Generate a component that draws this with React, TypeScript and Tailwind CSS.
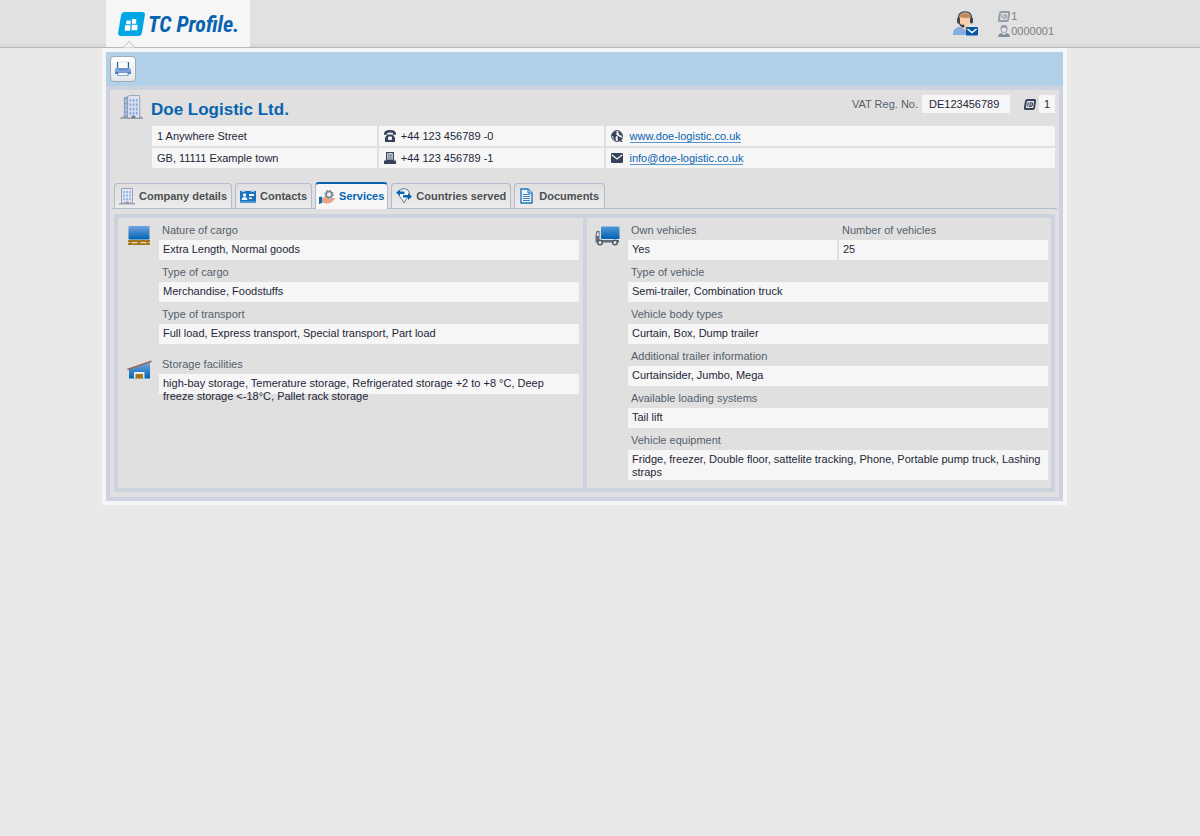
import React, { useState } from "react";

type IconProps = { className?: string };

const LogoMark = () => (
  <svg viewBox="0 0 27 24" className="h-6 w-[27px] shrink-0" aria-hidden="true">
    <path d="M7 0H24Q27.400 0 26.800 3.300L24 20.500Q23.400 24 20 24H3Q-.4 24 .2 20.600L3 3.500Q3.600 0 7 0Z" fill="#00a5e3" />
    <path d="M8.500 8.500H12.700V12.200H8.200ZM14 7H18.200V11.700H14ZM7 13.200H12.500L12 18.700H6.700ZM13.800 12.700H19.600L19.300 18.200H13.400Z" fill="#fff" />
  </svg>
);

const PrinterIcon = () => (
  <svg viewBox="0 0 16 16" className="size-4" aria-hidden="true">
    <path d="M3 1H13V8H3Z" fill="#fdfdff" stroke="#c3cfe0" strokeWidth=".6" />
    <path d="M2.500 1V7.500M13.500 1V7.500" stroke="#2f659f" strokeWidth="1.200" />
    <path d="M1.500 7H14.500Q16 7.500 16 9V13H0V9Q0 7.500 1.500 7Z" fill="#7ba3da" />
    <path d="M3.500 7.500H12.500V9H3.500Z" fill="#5c8cc9" />
    <path d="M0 11H16V13H0Z" fill="#4f7fc0" />
    <path d="M3.500 11.500H12.500L13.500 14.500H2.500Z" fill="#f4f8fd" stroke="#6c91c2" strokeWidth=".8" />
  </svg>
);

const BuildingIcon = ({ className }: IconProps) => (
  <svg viewBox="0 0 24 26" className={className} aria-hidden="true">
    <path d="M0 25Q1 22 4 22H21Q24 22.500 24 25Z" fill="#a3a3a9" />
    <path d="M4 2.500L9 1V24H4Z" fill="#8ba1c4" />
    <path d="M8 1.500L10 .5H20.500V24H8Z" fill="#dfe3ee" stroke="#8790a8" strokeWidth=".8" />
    <path d="M11 4V21M14.200 4V21M17.400 4V21" stroke="#86abe2" strokeWidth="1.800" strokeDasharray="3 1.500" />
    <path d="M6.200 5V21" stroke="#bcd4f4" strokeWidth="1.400" strokeDasharray="3 1.500" />
    <path d="M12 21.500H16V24H12Z" fill="#717785" />
  </svg>
);

const OfficeIcon = () => (
  <svg viewBox="0 0 16 17" className="h-[17px] w-4" aria-hidden="true">
    <path d="M0 16.500V15H2V14H14V15H16V16.500Z" fill="#9ca0ab" />
    <path d="M2.500 .5H13.500V15H2.500Z" fill="#e2e6ef" stroke="#98a3b8" />
    <path d="M5 3V13M8 3V13M11 3V13" stroke="#86abe2" strokeWidth="1.500" strokeDasharray="2.200 1.300" />
    <path d="M6.500 13.500H9.500V15.500H6.500Z" fill="#8b92a0" />
  </svg>
);

const SupportIcon = () => (
  <svg viewBox="0 0 25 25" className="size-[25px]" aria-hidden="true">
    <path d="M0 24V21Q1 16.500 8 15.500H14Q19 16.500 20 20V24Z" fill="#84aee2" />
    <path d="M9 14H15V17L12 19.500L9 17Z" fill="#f2c6a3" />
    <path d="M6.500 6Q7 2 12 2T17.500 6V10Q17 15.500 12 16T6.500 10Z" fill="#f7cfaf" />
    <path d="M6 9Q5 2 12 2T18 9L16.500 6.500Q11 7.500 7.500 6Z" fill="#c08a5c" />
    <path d="M5.500 8V6Q6 .8 12 .8T18.500 6V9" fill="none" stroke="#404753" strokeWidth="1.300" />
    <rect x="4" y="6.500" width="3" height="6" rx="1.500" fill="#3d4755" />
    <rect x="17" y="6.500" width="3" height="6" rx="1.500" fill="#3d4755" />
    <path d="M6 12Q7 14.500 10 15" fill="none" stroke="#323a46" strokeWidth="1.300" />
    <circle cx="10" cy="15" r="1.500" fill="#323a46" />
    <rect x="13" y="16" width="12" height="8.500" rx="1" fill="#0756a4" />
    <path d="M14.500 18L19 21.500L23.500 18" fill="none" stroke="#fff" strokeWidth="1.400" />
  </svg>
);

const IdIcon = ({ className }: IconProps) => (
  <svg viewBox="0 0 12 11" className={className} aria-hidden="true">
    <path d="M3.500 1H10.500Q11.400 1 11.200 2L10 9Q9.800 10 9 10H1.500Q.6 10 .8 9L2 2Q2.200 1 3.500 1Z" fill="none" stroke="currentColor" strokeWidth="1.900" />
    <path d="M4.300 3.500L3.700 7.500M6.300 3.700H7.500Q8.800 3.800 8.400 5.500T6.800 7.400H5.800Z" fill="none" stroke="currentColor" strokeWidth="1.100" />
  </svg>
);

const PersonIcon = () => (
  <svg viewBox="0 0 12 12" className="size-3" aria-hidden="true">
    <path d="M3 4Q3 .6 6 .6T9 4Q9 7.500 6 7.500T3 4Z" fill="#e6e6e8" stroke="#a0a7b1" strokeWidth="1.100" />
    <path d="M2.800 4Q2.500 0 6 0T9.200 4Q8 2.500 6 2.500T2.800 4Z" fill="#929ba6" />
    <path d="M0 12Q0 8.800 3.500 8L6 10L8.500 8Q12 8.800 12 12Z" fill="#838e9b" />
  </svg>
);

const PhoneIcon = () => (
  <svg viewBox="0 0 12 12" className="size-3" aria-hidden="true">
    <path d="M0 4Q0 0 6 0T12 4V4.800H9V3Q6 2 3 3V4.800H0Z" fill="#34435a" />
    <path d="M3.500 4.500H8.500L11 7.500V12H1V7.500Z" fill="#34435a" />
    <rect x="4" y="6.500" width="4" height="3.500" rx="1" fill="#f6f6f6" />
  </svg>
);

const FaxIcon = () => (
  <svg viewBox="0 0 12 12" className="size-3" aria-hidden="true">
    <path d="M2.700 .7H9.300V8.500H2.700Z" fill="#fff" stroke="#34435a" strokeWidth="1.300" />
    <path d="M4 3H8M4 5H8M4 7H8" stroke="#34435a" />
    <path d="M1.500 7.500V9H10.500V7.500L12 9V12H0V9Z" fill="#34435a" />
  </svg>
);

const GlobeIcon = () => (
  <svg viewBox="0 0 12 12" className="size-3" aria-hidden="true">
    <circle cx="6" cy="6" r="5.400" fill="#f6f6f6" stroke="#34435a" />
    <path d="M1 4L4 1L6 2L5 4L6.500 5.500L4.500 7L5 11L2.500 9L2.300 6.500L.7 5.500ZM7 1L10.500 3L11 6L8.500 5L7.500 3Z" fill="#34435a" />
    <path d="M6.500 5.500L12 9L10 9.500L11.500 12H9.800L8.700 10L7 11.500Z" fill="#34435a" />
  </svg>
);

const MailIcon = () => (
  <svg viewBox="0 0 12 10" className="h-2.5 w-3" aria-hidden="true">
    <rect width="12" height="10" rx="1.300" fill="#34435a" />
    <path d="M1 2L6 6L11 2" fill="none" stroke="#f6f6f6" strokeWidth="1.300" />
  </svg>
);

const ContactsIcon = () => (
  <svg viewBox="0 0 16 13" className="h-[13px] w-4" aria-hidden="true">
    <rect y="1" width="16" height="12" fill="#1d72be" />
    <path d="M2 0H5V2H2ZM11 0H14V2H11Z" fill="#a9c8e5" />
    <circle cx="4.500" cy="5" r="1.700" fill="#eff7ff" />
    <path d="M1.500 10Q2 7 4.500 7T7.500 10ZM9 4H14V6H9ZM9 7.500H12V9H9Z" fill="#eff7ff" />
    <path d="M0 11H16V13H0Z" fill="#4b98d4" />
  </svg>
);

const ServicesIcon = () => (
  <svg viewBox="0 0 16 14" className="h-3.5 w-4" aria-hidden="true">
    <circle cx="10" cy="4.500" r="3" fill="#dce1e8" stroke="#7b8290" strokeWidth="1.600" />
    <circle cx="10" cy="4.500" r="4.100" fill="none" stroke="#7b8290" strokeWidth="1.200" strokeDasharray="1.500 1.720" />
    <circle cx="10" cy="4.500" r="1.100" fill="#f9fafb" />
    <path d="M3 8.500L6 7.500L9 9.500H11L15 8Q16 8.500 15 9.500L12 12Q10 13.500 7 13L3 12Z" fill="#eda486" stroke="#d18369" strokeWidth=".5" />
    <path d="M0 7L3 6.500V13L0 14Z" fill="#1768ae" />
  </svg>
);

const CountriesIcon = () => (
  <svg viewBox="0 0 16 16" className="size-4" aria-hidden="true">
    <path d="M8 15Q6.800 12 4 9Q1 5 4 2Q8-1 12 2Q15 5 12 9Q9.200 12 8 15Z" fill="#f5f6f7" stroke="#737b86" />
    <path d="M0 4.500L4 1.500V3.500H8.500V6H4V8ZM16 8.500L12 5V7H7V9.500H12V12Z" fill="#0864b1" />
  </svg>
);

const DocumentIcon = () => (
  <svg viewBox="0 0 13 16" className="h-4 w-[13px]" aria-hidden="true">
    <path d="M1 1H8L12 5V15H1Z" fill="#edf6fe" stroke="#1b77bb" strokeWidth="1.400" />
    <path d="M8 1V5H12" fill="#b8d8f3" stroke="#1b77bb" />
    <path d="M3 6.500H10M3 8.500H10M3 10.500H10M3 12.500H10" stroke="#467eaf" />
  </svg>
);

const CargoIcon = () => (
  <svg viewBox="0 0 22 19" className="h-[19px] w-[22px]" aria-hidden="true">
    <defs>
      <linearGradient id="cargo" x2="0" y2="1">
        <stop stopColor="#73a3df" />
        <stop offset="1" stopColor="#0062b2" />
      </linearGradient>
    </defs>
    <rect x=".5" width="21" height="13.500" rx="1" fill="url(#cargo)" />
    <path d="M0 14H22V16H20.500V17H22V19H0V17H1.500V16H0Z" fill="#a6761c" />
    <path d="M3.500 16H9.500V17.300H3.500ZM12.500 16H18.500V17.300H12.500Z" fill="#e0d6c1" />
  </svg>
);

const WarehouseIcon = () => (
  <svg viewBox="0 0 25 19" className="h-[19px] w-[25px]" aria-hidden="true">
    <defs>
      <linearGradient id="warehouse" x2="0" y2="1">
        <stop stopColor="#75a5df" />
        <stop offset="1" stopColor="#0066b5" />
      </linearGradient>
    </defs>
    <path d="M2 9.500L23 2.500V18.500H2Z" fill="url(#warehouse)" />
    <path d="M.5 9.500L24.500 1.200" stroke="#8e6358" strokeWidth="1.700" />
    <path d="M7 12H17.500V18.500H7Z" fill="#e8edf2" />
    <path d="M8.500 14H16V18.500H8.500Z" fill="#a5781c" />
  </svg>
);

const TruckIcon = () => (
  <svg viewBox="0 0 25 20" className="h-5 w-[25px]" aria-hidden="true">
    <defs>
      <linearGradient id="truck" x2="0" y2="1">
        <stop stopColor="#5399d8" />
        <stop offset="1" stopColor="#0061b1" />
      </linearGradient>
    </defs>
    <rect x="6" y=".5" width="18.500" height="12.500" rx="1" fill="url(#truck)" />
    <path d="M1.500 5H4.500V14H24V16.500H.5V9Z" fill="#626c7d" />
    <path d="M2 6.500H3.700V10H1.500Z" fill="#dce6ef" />
    <circle cx="5" cy="16.500" r="2.300" fill="#e5e5e5" stroke="#4e596c" strokeWidth="1.500" />
    <circle cx="20" cy="16.500" r="2.300" fill="#e5e5e5" stroke="#4e596c" strokeWidth="1.500" />
  </svg>
);

const tabs = [
  { name: "Company details", icon: <OfficeIcon />, spacing: "gap-1 px-1" },
  { name: "Contacts", icon: <ContactsIcon />, spacing: "gap-1 px-1" },
  { name: "Services", icon: <ServicesIcon />, spacing: "gap-1 px-[3px]" },
  { name: "Countries served", icon: <CountriesIcon />, spacing: "gap-1 px-1" },
  { name: "Documents", icon: <DocumentIcon />, spacing: "gap-[6px] px-[5px]" },
];

const Field = ({ label, value, overflow = false }: { label: string; value: string; overflow?: boolean }) => (
  <div className="min-w-0 flex-1">
    <dt className="flex h-[22px] items-center pt-[2px] pl-[3px] text-[11px] leading-4 text-[#54616d]">{label}</dt>
    <dd className={`bg-[#f6f6f6] pt-[3px] pr-1 pb-px pl-1 text-[11px] leading-[13px] text-[#1d2738] ${overflow ? "h-5" : "min-h-5"}`}>
      {overflow ? <p className="max-w-[400px]">{value}</p> : value}
    </dd>
  </div>
);

const cell = "flex h-5 items-center gap-[5px] bg-[#f6f6f6] px-[5px]";
const link = "ml-[2px] border-b border-[#5b96cc] leading-[12px] text-[#0864b1]";

export default function App() {
  const [active, setActive] = useState("Services");
  return (
    <div className="min-h-screen bg-[#e9e9e9] font-['Liberation_Sans',Arial,sans-serif] text-[11px] text-[#1d2738]">
      <header className="h-12 border-b border-[#b7b7b9] bg-linear-to-b from-[#e1e1e1] from-90% to-[#d6d6d7] pr-[31px]">
        <div className="mx-auto flex h-full max-w-[965px] items-start justify-between pr-[13px] pl-1">
          <a href="#" className="relative flex h-[47px] w-36 items-center gap-[3px] bg-[#f6f6f6] pl-3 text-[#0864b1]">
            <LogoMark />
            <span className="pt-[3px] font-['Liberation_Sans_Narrow','Roboto_Condensed','Liberation_Sans',sans-serif] text-[22px] leading-6 font-bold whitespace-nowrap italic">TC Profile.</span>
            <svg viewBox="0 0 14 7" className="absolute -bottom-px left-4 h-[7px] w-3.5" aria-hidden="true">
              <path d="M0 6.500H1L7 .5L13 6.500H14" fill="#f6f6f6" stroke="#b4b4b6" />
            </svg>
          </a>
          <div className="flex gap-5 pt-[9px] text-[#808080]">
            <a href="#" aria-label="Support"><span className="block pt-[2px]"><SupportIcon /></span></a>
            <div className="leading-[15px]">
              <div className="flex h-[14px] items-center gap-px"><IdIcon className="h-[11px] w-3 text-[#939ca7]" />1</div>
              <div className="flex h-4 items-center gap-px"><PersonIcon />0000001</div>
            </div>
          </div>
        </div>
      </header>

      <div className="pr-[31px]">
        <main className="mx-auto max-w-[965px] border-4 border-[#f6f6f6]">
          <div className="flex h-[34px] items-center bg-[#b2d0e8] px-1">
            <button type="button" aria-label="Print" className="flex size-[26px] items-center justify-center rounded-[4px] border border-[#a1a9b7] bg-linear-to-b from-white to-[#e6e7eb]">
              <PrinterIcon />
            </button>
          </div>

          <div className="border-4 border-[#ccd3df] bg-[#e0e0e0]">
            <section className="pt-[5px] pr-1 pl-[10px]">
              <div className="flex h-[31px] items-start justify-between">
                <div className="flex items-start gap-2">
                  <BuildingIcon className="h-[25px] w-[23px]" />
                  <h1 className="pt-[3px] text-[17px] leading-6 font-bold text-[#0864b1]">Doe Logistic Ltd.</h1>
                </div>
                <dl className="flex items-center">
                  <dt className="pr-1 text-[#54616d]">VAT Reg. No.</dt>
                  <dd className="h-[18px] w-[88px] bg-[#f6f6f6] pl-[7px] leading-[18px]">DE123456789</dd>
                  <dt className="pr-[3px] pl-[14px]"><IdIcon className="h-[11px] w-3 text-[#34435a]" /></dt>
                  <dd className="h-[18px] w-4 bg-[#f6f6f6] pl-[5px] leading-[18px]">1</dd>
                </dl>
              </div>
              <address className="ml-8 grid grid-cols-[1fr_1fr_2fr] gap-[2px] not-italic">
                <div className={cell}>1 Anywhere Street</div>
                <div className={cell}><PhoneIcon />+44 123 456789 -0</div>
                <div className={cell}><GlobeIcon /><a href="#" className={link}>www.doe-logistic.co.uk</a></div>
                <div className={cell}>GB, 11111 Example town</div>
                <div className={cell}><FaxIcon />+44 123 456789 -1</div>
                <div className={cell}><MailIcon /><a href="#" className={link}>info@doe-logistic.co.uk</a></div>
              </address>
            </section>

            <div role="tablist" className="mx-[2px] mt-[14px] flex h-[27px] items-end gap-[3px] border-b border-[#b3bacb] pl-[2px]">
              {tabs.map((tab) => (
                <button
                  key={tab.name}
                  type="button"
                  role="tab"
                  aria-selected={active === tab.name}
                  onClick={() => setActive(tab.name)}
                  className={`flex items-center rounded-t-[4px] border-x border-t text-[11px] font-bold whitespace-nowrap ${tab.spacing} ${
                    active === tab.name
                      ? "-mb-px h-[27px] border-[#b3bacb] border-t-2 border-t-[#0864b1] bg-[#f6f6f6] text-[#0864b1]"
                      : "h-[25px] border-[#b3bacb] bg-linear-to-b from-[#e0e0e0] to-[#ebebeb] text-[#4c5052]"
                  }`}
                >
                  {tab.icon}
                  {tab.name}
                </button>
              ))}
            </div>

            <div role="tabpanel" className="mx-1 mt-[5px] mb-[5px] grid grid-cols-[465fr_468fr] border-4 border-[#ccd3df]">
              <section className="flex pr-1 pb-2 pl-[9px]">
                <div className="flex min-w-0 flex-1 flex-col gap-2">
                  <div className="flex">
                    <div className="w-8 shrink-0 pt-2 pl-px"><CargoIcon /></div>
                    <dl className="flex min-w-0 flex-1 flex-col">
                      <Field label="Nature of cargo" value="Extra Length, Normal goods" />
                      <Field label="Type of cargo" value="Merchandise, Foodstuffs" />
                      <Field label="Type of transport" value="Full load, Express transport, Special transport, Part load" />
                    </dl>
                  </div>
                  <div className="flex">
                    <div className="w-8 shrink-0 pt-2"><WarehouseIcon /></div>
                    <dl className="min-w-0 flex-1">
                      <Field overflow label="Storage facilities" value="high-bay storage, Temerature storage, Refrigerated storage +2 to +8 °C, Deep freeze storage <-18°C, Pallet rack storage" />
                    </dl>
                  </div>
                </div>
              </section>
              <section className="flex border-l-4 border-[#ccd3df] pr-[3px] pb-2 pl-2">
                <div className="w-[33px] shrink-0 pt-2"><TruckIcon /></div>
                <dl className="min-w-0 flex-1">
                  <div className="flex gap-[2px]">
                    <Field label="Own vehicles" value="Yes" />
                    <Field label="Number of vehicles" value="25" />
                  </div>
                  <Field label="Type of vehicle" value="Semi-trailer, Combination truck" />
                  <Field label="Vehicle body types" value="Curtain, Box, Dump trailer" />
                  <Field label="Additional trailer information" value="Curtainsider, Jumbo, Mega" />
                  <Field label="Available loading systems" value="Tail lift" />
                  <Field label="Vehicle equipment" value="Fridge, freezer, Double floor, sattelite tracking, Phone, Portable pump truck, Lashing straps" />
                </dl>
              </section>
            </div>
          </div>
        </main>
      </div>
    </div>
  );
}
